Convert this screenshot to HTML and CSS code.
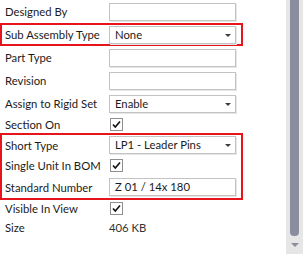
FILE: index.html
```html
<!DOCTYPE html>
<html lang="en">
<head>
<meta charset="UTF-8">
<title>Properties</title>
<link rel="stylesheet" href="styles.css">
</head>
<body>
<div class="frame">
<div class="panel">
<div class="row r-top">
<div class="label">Designed By</div>
<div class="field"></div>
</div>
<div class="group g-sub">
<div class="row r-sub">
<div class="label">Sub Assembly Type</div>
<div class="field select">None<span class="arrow"></span></div>
</div>
</div>
<div class="row">
<div class="label">Part Type</div>
<div class="field"></div>
</div>
<div class="row">
<div class="label">Revision</div>
<div class="field"></div>
</div>
<div class="row">
<div class="label">Assign to Rigid Set</div>
<div class="field select">Enable<span class="arrow"></span></div>
</div>
<div class="row r-check">
<div class="label">Section On</div>
<div class="check"><svg width="11" height="11" viewBox="0 0 11 11"><path d="M2 5.5 L4.3 8 L9 2.5" fill="none" stroke="#111" stroke-width="1.6"/></svg></div>
</div>
<div class="group g-short">
<div class="row r-short">
<div class="label">Short Type</div>
<div class="field select">LP1 - Leader Pins<span class="arrow"></span></div>
</div>
<div class="row r-single">
<div class="label">Single Unit In BOM</div>
<div class="check"><svg width="11" height="11" viewBox="0 0 11 11"><path d="M2 5.5 L4.3 8 L9 2.5" fill="none" stroke="#111" stroke-width="1.6"/></svg></div>
</div>
<div class="row r-std">
<div class="label">Standard Number</div>
<div class="field">Z 01 / 14x 180</div>
</div>
</div>
<div class="row r-visible">
<div class="label">Visible In View</div>
<div class="check"><svg width="11" height="11" viewBox="0 0 11 11"><path d="M2 5.5 L4.3 8 L9 2.5" fill="none" stroke="#111" stroke-width="1.6"/></svg></div>
</div>
<div class="row r-size">
<div class="label">Size</div>
<div class="value">406 KB</div>
</div>
</div>
<div class="scrollbar">
<div class="thumb"></div>
<div class="down"></div>
</div>
</div>
</body>
</html>
```

FILE: styles.css
```css
body {
margin: 0;
background-color: #fff;
font-family: Lato, 'Noto Sans', sans-serif;
font-size: 11.3px;
color: #1b1b1b;
}

.frame {
display: flex;
width: 303px;
height: 254px;
overflow: hidden;
}

.panel {
width: 286px;
}

.row {
display: flex;
align-items: center;
height: 23px;
padding-left: 5px;
}

.label {
width: 104px;
flex-shrink: 0;
white-space: nowrap;
}

.field {
box-sizing: border-box;
width: 127px;
height: 18px;
border: 1px solid #c3c3c3;
box-shadow: 1px 1px 0 #e6e6e6;
background-color: #fff;
padding-left: 5px;
line-height: 16px;
position: relative;
white-space: nowrap;
}

.select .arrow {
position: absolute;
right: 4px;
top: 7px;
width: 0;
height: 0;
border-left: 3px solid transparent;
border-right: 3px solid transparent;
border-top: 3px solid #3c3c3c;
}

.check {
box-sizing: border-box;
width: 13px;
height: 13px;
margin-left: 1px;
border: 1px solid #8f8f8f;
background-color: #fff;
display: flex;
align-items: center;
justify-content: center;
}

.value {
color: #333;
}

.group {
box-sizing: border-box;
width: 243px;
border: 2px solid #e8141c;
}

.group .row {
padding-left: 3px;
}

.r-sub {
height: 19px;
}

.r-check {
height: 18px;
}

.r-short {
height: 20px;
}

.r-single {
height: 21px;
}

.r-std {
height: 22px;
}

.r-visible {
height: 17px;
}

.r-size {
height: 20px;
}

.scrollbar {
width: 17px;
background-color: #e6e6e6;
position: relative;
}

.thumb {
position: absolute;
left: 4px;
top: 0;
width: 9px;
height: 236px;
background-color: #8a8d9e;
border-radius: 0 0 4px 4px;
}

.down {
position: absolute;
left: 5px;
top: 243px;
width: 0;
height: 0;
border-left: 4px solid transparent;
border-right: 4px solid transparent;
border-top: 4px solid #8a8d9e;
}
```
